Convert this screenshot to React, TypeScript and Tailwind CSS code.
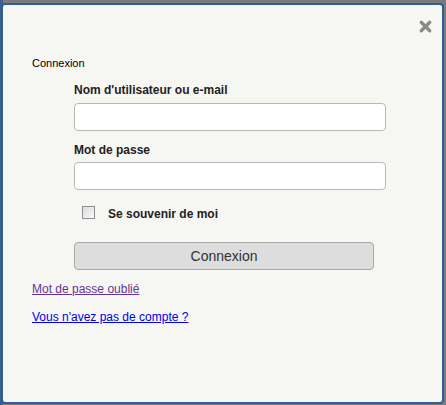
import { X } from 'lucide-react';

export default function App() {
  return (
    <div className="w-[446px] h-[405px] bg-[#7b7b7b] relative overflow-hidden font-['Liberation_Sans',Arial,sans-serif]">
      {/* backdrop strip */}
      <div className="absolute left-0 top-0 w-[3px] h-[405px] bg-[#3a5f88]" />
      <div className="absolute left-[1px] top-[3px] w-[443px] h-[401px] rounded-[4px] border-2 border-[#2e5e95] bg-[#f6f6f2]">
        <button className="absolute right-[8px] top-[13px] text-[#8a8a8a]">
          <X size={17} strokeWidth={4.5} />
        </button>
        <div className="pl-[29px] pt-[52px]">
          <div className="text-[11px] text-black leading-[12px]">Connexion</div>
          <form className="pl-[42px] pt-[14px] w-[340px] flex flex-col">
            <label className="text-[12px] font-bold text-[#222] leading-[14px]">Nom d'utilisateur ou e-mail</label>
            <input className="mt-[6px] w-[312px] h-[28px] bg-white border border-[#b8b8b8] rounded-[4px]" />
            <label className="mt-[12px] text-[12px] font-bold text-[#222] leading-[14px]">Mot de passe</label>
            <input type="password" className="mt-[5px] w-[312px] h-[28px] bg-white border border-[#b8b8b8] rounded-[4px]" />
            <div className="mt-[16px] flex items-start h-[14px]">
              <span className="ml-[8px] w-[13px] h-[13px] border border-[#8f8f8f] bg-gradient-to-br from-[#dcdcdc] to-[#f8f8f8]" />
              <span className="ml-[13px] mt-[1px] text-[12px] leading-[14px] font-bold text-[#222]">Se souvenir de moi</span>
            </div>
            <button type="button" className="mt-[22px] w-[300px] h-[28px] bg-[#dddddd] border border-[#a9a9a9] rounded-[4px] text-[14px] text-[#333]">
              Connexion
            </button>
          </form>
          <div className="mt-[12px] flex flex-col items-start gap-[14px] text-[12px] leading-[14px]">
            <a href="#" className="underline text-[#663399]">Mot de passe oublié</a>
            <a href="#" className="underline text-[#0000ee]">Vous n'avez pas de compte ?</a>
          </div>
        </div>
      </div>
    </div>
  );
}
